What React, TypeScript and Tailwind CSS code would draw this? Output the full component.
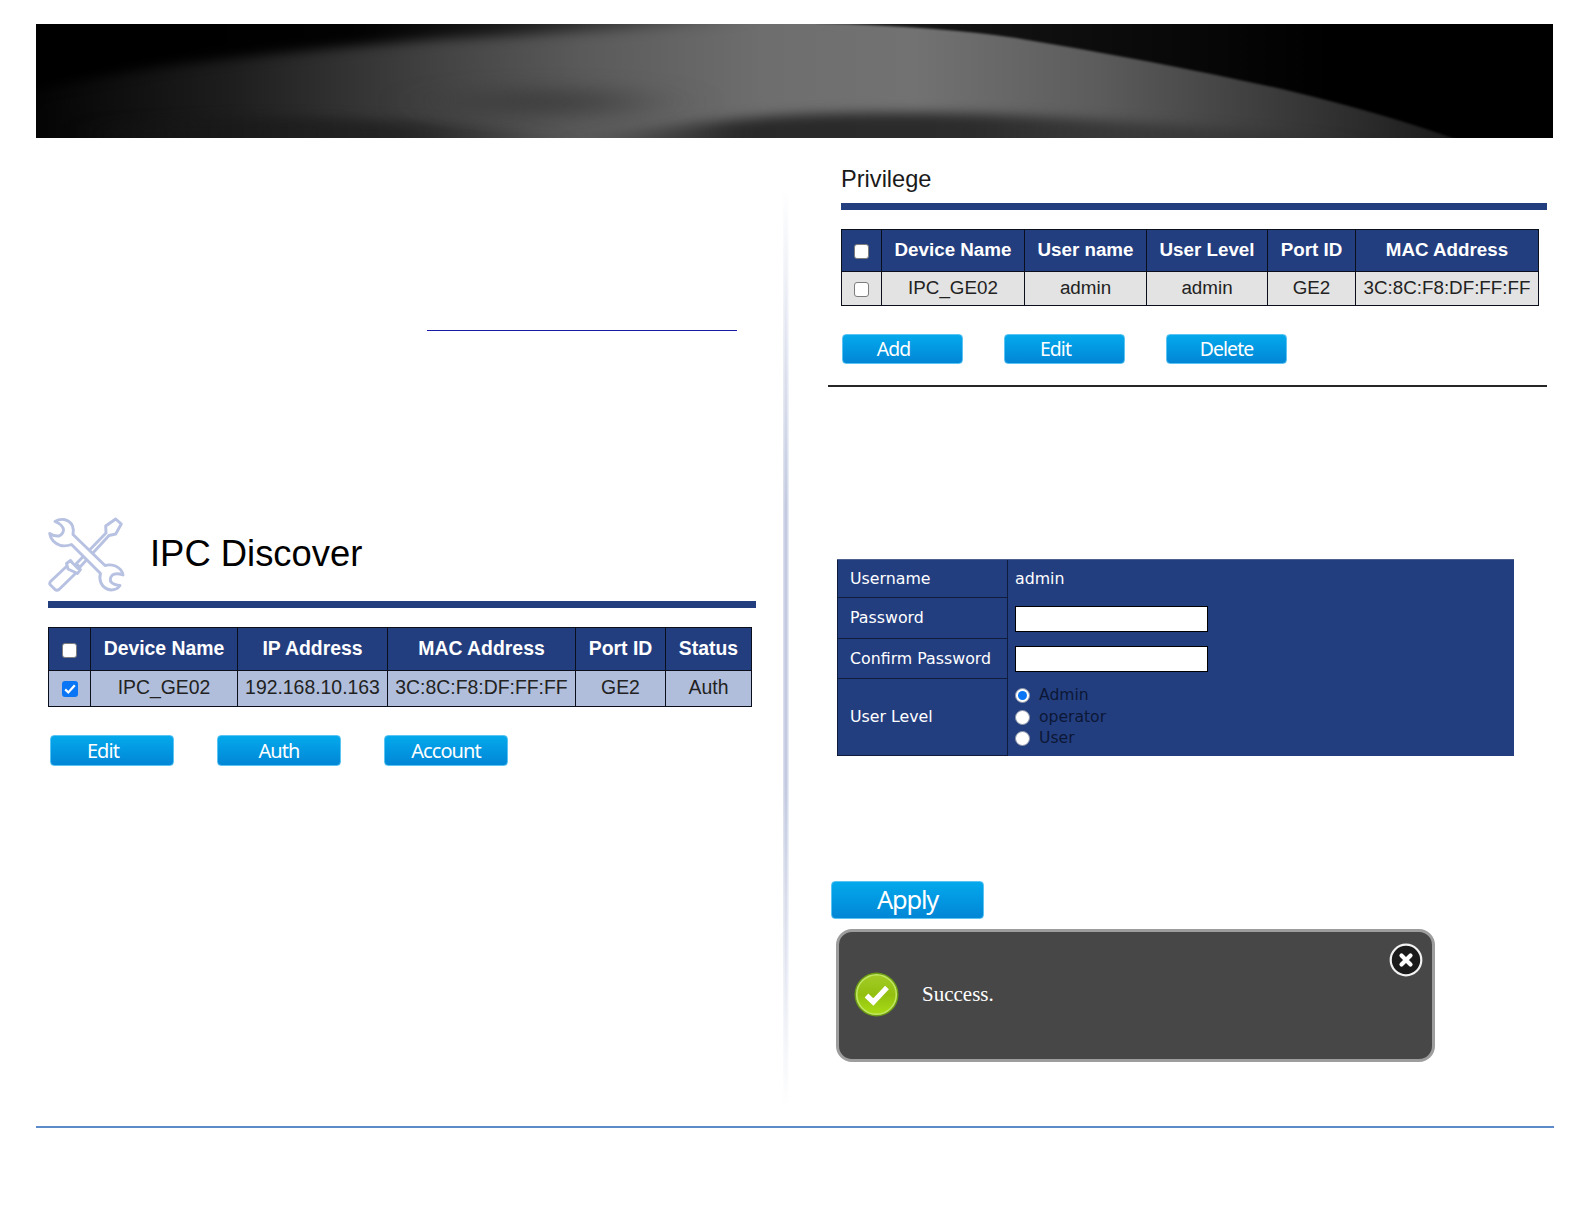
import type { ReactNode } from "react";

type Column = { label: string; value: string; width: string };

const discoverColumns: Column[] = [
  { label: "Device Name", value: "IPC_GE02", width: "w-[147px]" },
  { label: "IP Address", value: "192.168.10.163", width: "w-[150px]" },
  { label: "MAC Address", value: "3C:8C:F8:DF:FF:FF", width: "w-[188px]" },
  { label: "Port ID", value: "GE2", width: "w-[90px]" },
  { label: "Status", value: "Auth", width: "w-[86px]" },
];

const privilegeColumns: Column[] = [
  { label: "Device Name", value: "IPC_GE02", width: "w-[143px]" },
  { label: "User name", value: "admin", width: "w-[122px]" },
  { label: "User Level", value: "admin", width: "w-[121px]" },
  { label: "Port ID", value: "GE2", width: "w-[88px]" },
  { label: "MAC Address", value: "3C:8C:F8:DF:FF:FF", width: "w-[183px]" },
];

export default function App() {
  return (
    <div className="h-[1224px] w-[1584px] overflow-hidden bg-white pt-6 font-['Liberation_Sans',Arial,sans-serif] text-black">
      <Banner />
      <main className="flex h-[988px] pl-9">
        <LeftPage />
        <Divider />
        <RightPage />
      </main>
      <div className="ml-9 h-[2px] w-[1518px] bg-[#5b8bc9]" />
    </div>
  );
}

function Banner() {
  return (
    <header className="ml-9 h-[114px] w-[1517px] bg-black">
      <svg
        className="block h-full w-full"
        viewBox="0 0 1517 114"
        preserveAspectRatio="none"
        colorInterpolationFilters="sRGB"
      >
        <defs>
          <linearGradient id="beam" x1="0" x2="1517" y1="0" y2="0" gradientUnits="userSpaceOnUse">
            <stop offset="0" stopColor="#040404" />
            <stop offset="0.13" stopColor="#1e1e1e" />
            <stop offset="0.27" stopColor="#444" />
            <stop offset="0.36" stopColor="#5a5a5a" />
            <stop offset="0.48" stopColor="#6e6e6e" />
            <stop offset="0.58" stopColor="#727272" />
            <stop offset="0.7" stopColor="#5c5c5c" />
            <stop offset="0.8" stopColor="#404040" />
            <stop offset="0.93" stopColor="#1c1c1c" />
          </linearGradient>
          <linearGradient id="corner" x1="0" x2="720" y1="0" y2="0" gradientUnits="userSpaceOnUse">
            <stop offset="0" stopColor="#000" />
            <stop offset="0.45" stopColor="#000" stopOpacity="0.95" />
            <stop offset="0.65" stopColor="#000" stopOpacity="0.65" />
            <stop offset="1" stopColor="#000" stopOpacity="0" />
          </linearGradient>
          <linearGradient id="sky" x1="780" x2="1300" y1="0" y2="0" gradientUnits="userSpaceOnUse">
            <stop offset="0" stopColor="#2a2a2a" />
            <stop offset="0.25" stopColor="#141414" />
            <stop offset="0.6" stopColor="#0b0b0b" />
            <stop offset="1" stopColor="#000" />
          </linearGradient>
          <linearGradient id="floor" x1="540" x2="1340" y1="0" y2="0" gradientUnits="userSpaceOnUse">
            <stop offset="0" stopColor="#292929" stopOpacity="0" />
            <stop offset="0.2" stopColor="#292929" />
            <stop offset="0.5" stopColor="#2c2c2c" />
            <stop offset="1" stopColor="#202020" stopOpacity="0" />
          </linearGradient>
          <linearGradient id="shade" x1="0" x2="520" y1="0" y2="0" gradientUnits="userSpaceOnUse">
            <stop offset="0" stopColor="#111" stopOpacity="0" />
            <stop offset="0.4" stopColor="#181818" stopOpacity="0.7" />
            <stop offset="0.7" stopColor="#202020" stopOpacity="0.85" />
            <stop offset="1" stopColor="#2a2a2a" stopOpacity="0" />
          </linearGradient>
          <filter id="haze" x="-200" y="-100" width="1900" height="320" filterUnits="userSpaceOnUse">
            <feGaussianBlur stdDeviation="12 6" />
          </filter>
          <filter id="cloud" x="-200" y="-100" width="1900" height="320" filterUnits="userSpaceOnUse">
            <feGaussianBlur stdDeviation="40 10" />
          </filter>
          <filter id="ground" x="-200" y="-100" width="1900" height="320" filterUnits="userSpaceOnUse">
            <feGaussianBlur stdDeviation="16 6" />
          </filter>
          <filter id="edge" x="-200" y="-100" width="1900" height="320" filterUnits="userSpaceOnUse">
            <feGaussianBlur stdDeviation="1.2" />
          </filter>
        </defs>
        <rect width="1517" height="114" fill="url(#beam)" />
        <path d="M-60 -40H740V-4Q560 8 400 15Q240 28 130 42Q40 55 -60 80Z" fill="url(#corner)" filter="url(#haze)" />
        <path d="M780 -20V-1Q910 3 980 14Q1120 37 1250 66Q1350 90 1422 116H1560V-20Z" fill="url(#sky)" filter="url(#edge)" />
        <path d="M60 150V100Q300 82 520 112V150Z" fill="url(#shade)" filter="url(#ground)" />
        <ellipse cx="515" cy="78" rx="90" ry="12" fill="#303030" fillOpacity=".65" filter="url(#cloud)" />
        <path d="M540 150V116Q640 100 740 92Q880 84 1060 96Q1240 106 1380 124V150Z" fill="url(#floor)" filter="url(#ground)" />
      </svg>
    </header>
  );
}

function LeftPage() {
  return (
    <section className="w-[740px] shrink-0 pl-3">
      <div className="pt-[192px]">
        <div className="ml-[379px] h-px w-[310px] bg-[#1a1aa6]" />
      </div>
      <div className="mt-[187px] flex h-[74px]">
        <ToolsIcon />
        <h1 className="ml-[25px] pt-[15px] text-[36.4px] leading-[42px]">IPC Discover</h1>
      </div>
      <div className="mt-[9px] h-[7px] w-[708px] bg-[#233e7f]" />
      <div className="mt-[19px]">
        <DeviceTable columns={discoverColumns} checked size="text-[19.4px]" head="h-[43px]" row="h-[36px] bg-[#b0bedb]" check="w-[42px]" />
      </div>
      <div className="mt-7 flex gap-[43px] pl-[2px]">
        <Button className="h-[31px] w-[124px] pr-[18px] text-[20px]">Edit</Button>
        <Button className="h-[31px] w-[124px] text-[20px]">Auth</Button>
        <Button className="h-[31px] w-[124px] text-[20px]">Account</Button>
      </div>
    </section>
  );
}

function Divider() {
  return (
    <div className="mt-[50px] flex h-[918px] w-5 shrink-0 justify-center">
      <div className="h-full w-[6px] bg-gradient-to-r from-[#dfe4ef] via-[#bcc3dd] to-[#eef3f8] [mask-image:linear-gradient(to_bottom,transparent,black_35%,black_65%,transparent)]" />
    </div>
  );
}

function RightPage() {
  return (
    <section className="w-[760px] shrink-0 pl-8">
      <div className="w-[719px] border-b-2 border-[#262626] pb-[21px] pl-[13px]">
        <h2 className="pt-[27px] text-[23.6px] leading-[28px] text-[#1a1a1a]">Privilege</h2>
        <div className="mt-[10px] h-[7px] w-[706px] bg-[#233e7f]" />
        <div className="mt-[19px]">
          <DeviceTable columns={privilegeColumns} size="text-[18.8px]" head="h-[42px]" row="h-[34px] bg-[#e3e3e3]" check="w-[40px]" />
        </div>
        <div className="mt-7 flex gap-[41px] pl-[1px]">
          <Button className="h-[30px] w-[121px] pr-[18px] text-[19.4px]">Add</Button>
          <Button className="h-[30px] w-[121px] pr-[18px] text-[19.4px]">Edit</Button>
          <Button className="h-[30px] w-[121px] text-[19.4px]">Delete</Button>
        </div>
      </div>
      <AccountForm />
      <Button className="mt-[125px] ml-[3px] h-[38px] w-[153px] text-[25.4px]">Apply</Button>
      <SuccessMessage />
    </section>
  );
}

function DeviceTable({
  columns,
  checked = false,
  size,
  head,
  row,
  check,
}: {
  columns: Column[];
  checked?: boolean;
  size: string;
  head: string;
  row: string;
  check: string;
}) {
  return (
    <div className={`w-max border-t border-l border-[#0b0f1c] ${size}`}>
      <div className={`flex bg-[#233e7f] font-bold text-white ${head}`}>
        <div className={`flex items-center justify-center border-r border-b border-[#0b0f1c] pt-[2px] ${check}`}>
          <Checkbox />
        </div>
        {columns.map((c) => (
          <div key={c.label} className={`flex items-center justify-center border-r border-b border-[#0b0f1c] whitespace-nowrap ${c.width}`}>
            {c.label}
          </div>
        ))}
      </div>
      <div className={`flex text-[#222] ${row}`}>
        <div className={`flex items-center justify-center border-r border-b border-[#0b0f1c] pt-px ${check}`}>
          <Checkbox checked={checked} />
        </div>
        {columns.map((c) => (
          <div key={c.label} className={`flex items-center justify-center border-r border-b border-[#0b0f1c] pb-px whitespace-nowrap ${c.width}`}>
            {c.value}
          </div>
        ))}
      </div>
    </div>
  );
}

function Checkbox({ checked = false }: { checked?: boolean }) {
  if (!checked) {
    return <span className="block size-[15px] rounded-[3px] border border-[#7d7d7d] bg-white" />;
  }
  return (
    <span className="block size-4 rounded-[3px] bg-[#0b76f5]">
      <svg viewBox="0 0 16 16" className="block size-full" fill="none" stroke="#fff" strokeWidth="2.2">
        <path d="M3.2 8.4L6.3 11.5L12.8 4.2" />
      </svg>
    </span>
  );
}

function Button({ className, children }: { className: string; children: ReactNode }) {
  return (
    <button
      className={`flex items-center justify-center rounded-[4px] border border-[#5cc4f2] bg-gradient-to-b from-[#05a9ec] to-[#0286d6] font-['Noto_Sans',Tahoma,sans-serif] leading-none tracking-[-0.045em] text-white ${className}`}
    >
      {children}
    </button>
  );
}

function AccountForm() {
  return (
    <div className="mt-[172px] ml-[9px] w-[677px] border-t border-[#4c5f90] bg-[#233e7f] font-['DejaVu_Sans',Verdana,sans-serif] text-[15.8px] text-white">
      <FormRow label="Username" height="h-[38px]">
        admin
      </FormRow>
      <FormRow label="Password" height="h-[41px]">
        <input type="password" className="h-[26px] w-[193px] border border-black bg-white" />
      </FormRow>
      <FormRow label="Confirm Password" height="h-[40px]">
        <input type="password" className="h-[26px] w-[193px] border border-black bg-white" />
      </FormRow>
      <FormRow label="User Level" height="h-[77px]">
        <div className="text-[15.6px] text-[#0c1735]">
          <Radio label="Admin" selected />
          <Radio label="operator" />
          <Radio label="User" />
        </div>
      </FormRow>
    </div>
  );
}

function FormRow({ label, height, children }: { label: string; height: string; children: ReactNode }) {
  return (
    <div className={`flex ${height}`}>
      <div className="flex w-[171px] items-center border-r border-b border-l border-[#101c3c] pl-[12px] whitespace-nowrap">
        {label}
      </div>
      <div className="flex items-center pl-[7px]">{children}</div>
    </div>
  );
}

function Radio({ label, selected = false }: { label: string; selected?: boolean }) {
  return (
    <div className="flex h-[21.5px] items-center gap-[9px]">
      <span className="mb-px flex size-[15px] items-center justify-center rounded-full border border-[#8a93a8] bg-white">
        {selected && <span className="size-[9px] rounded-full bg-[#0b76f5]" />}
      </span>
      {label}
    </div>
  );
}

function SuccessMessage() {
  return (
    <div className="mt-[10px] ml-2 flex h-[133px] w-[599px] items-start justify-between rounded-[16px] border-[3px] border-[#9d9d9d] bg-[#474747]">
      <div className="flex items-center pt-[40px] pl-[15px]">
        <CheckIcon />
        <span className="ml-[23px] pb-[0.5px] font-['Liberation_Serif',serif] text-[21px] text-white">Success.</span>
      </div>
      <CloseIcon />
    </div>
  );
}

function CheckIcon() {
  return (
    <svg width="45" height="45" viewBox="0 0 45 45">
      <defs>
        <linearGradient id="lime" x1="0" y1="0" x2="0" y2="1">
          <stop offset="0" stopColor="#a3cc26" />
          <stop offset="0.5" stopColor="#93c010" />
          <stop offset="1" stopColor="#a8dc14" />
        </linearGradient>
      </defs>
      <circle cx="22.5" cy="22.5" r="22" fill="#6c9c12" />
      <circle cx="22.5" cy="22.5" r="19.8" fill="url(#lime)" stroke="#c2e663" strokeWidth="1.6" />
      <path d="M12.5 23.5L19.3 30L33 15.5" fill="none" stroke="#fff" strokeWidth="5.2" />
    </svg>
  );
}

function CloseIcon() {
  return (
    <svg className="mt-[11px] mr-[9px]" width="34" height="34" viewBox="0 0 34 34">
      <circle cx="17" cy="17" r="15.3" fill="#1b1b1b" stroke="#f2f2f2" strokeWidth="2.2" />
      <path d="M12.5 12.5L21.5 21.5M21.5 12.5L12.5 21.5" stroke="#fff" strokeWidth="4.2" strokeLinecap="round" />
    </svg>
  );
}

// Crossed wrench and screwdriver
function ToolsIcon() {
  return (
    <svg
      className="shrink-0 overflow-visible"
      width="77"
      height="74"
      viewBox="0 1 77 74"
      fill="#fff"
      stroke="#b7c1e1"
      strokeWidth="2.9"
      strokeLinejoin="round"
    >
      <path d="M28 47L58 16L57.7 9L67.7 2L73.3 7L67.7 17L61 18.5L32 50Z" />
      <path d="M20 48L2.5 64.5Q1 66.500 2.500 68L7 72.500Q9 74 11 72.500L28.500 55.500Z" />
      <path d="M18.5 46.5L22.500 43.500L24.500 46L30 51.500L32.500 52.500L29.500 56.500L20 52Z" />
      <path d="M7 4.500Q11 2 16 2.500Q22 3.500 24.500 9Q26 13 25 17.500L57 48.500Q62 47 67.500 49Q74 52 75 58Q68 55.500 64.500 58Q61 61.500 63 65Q66 68 72 68.500Q69 73 63 73Q56 72 53 66Q51 61 52.500 56.500L23.500 27.500Q18 29.500 12.500 28.500Q3 25 1.700 16.500Q6 19.500 11 19Q15.500 17 15.500 12.500Q14.500 7.500 7 4.500Z" />
    </svg>
  );
}
